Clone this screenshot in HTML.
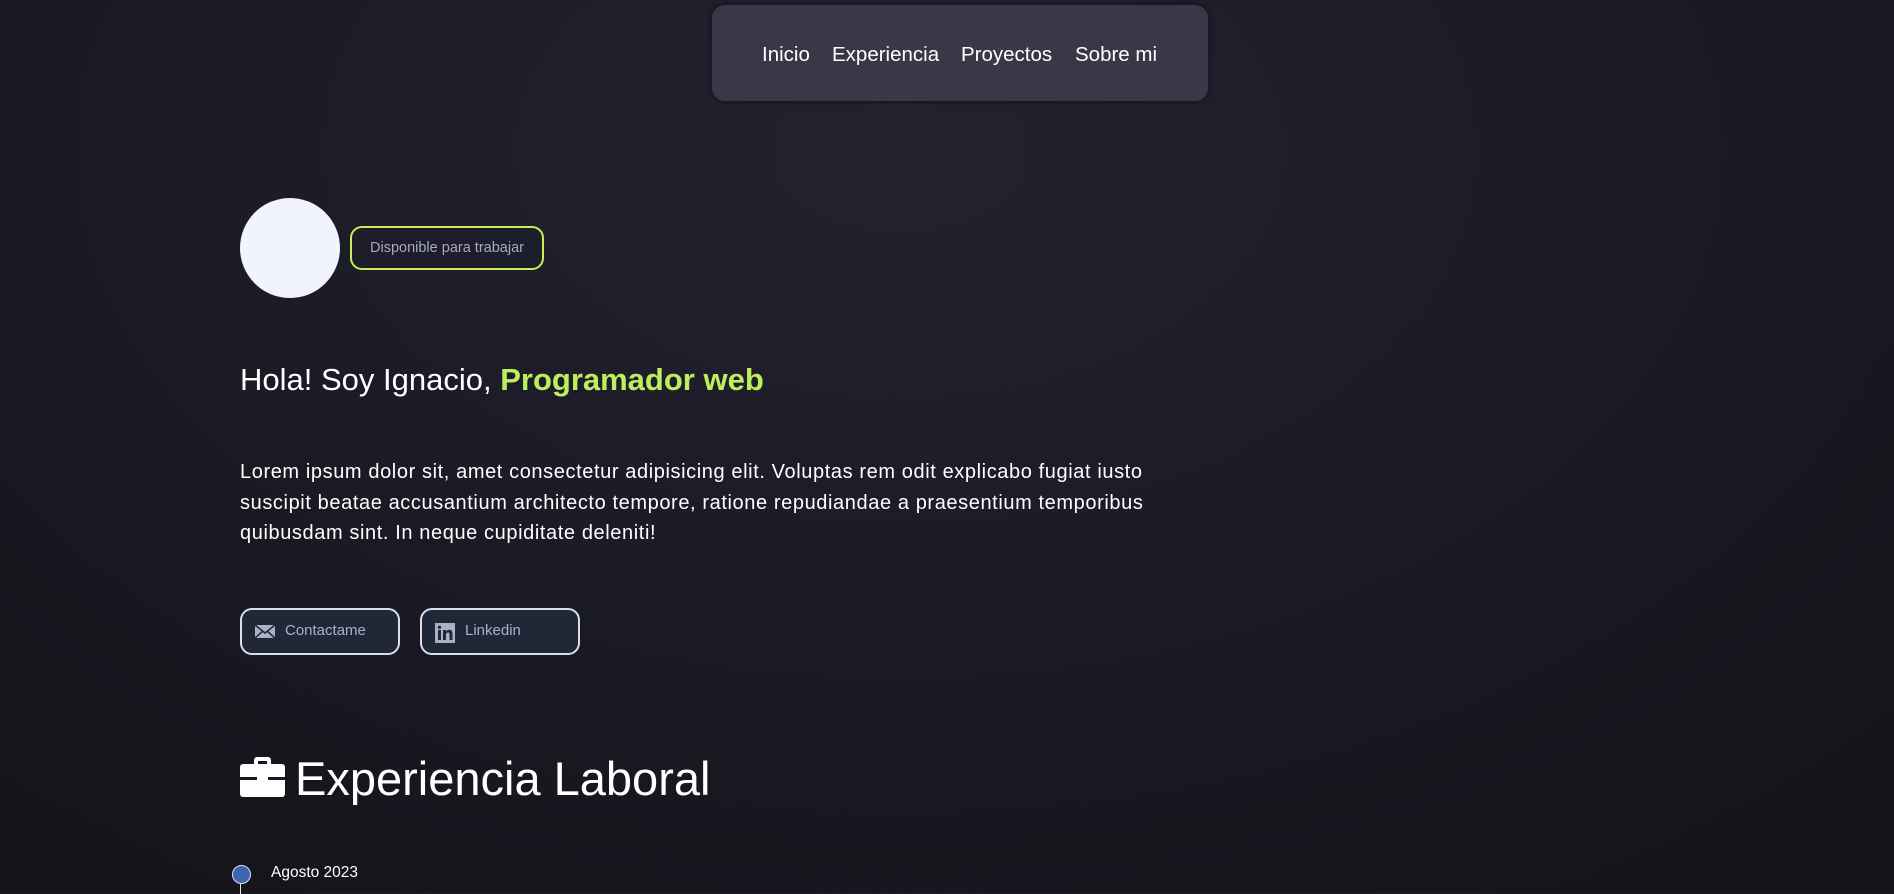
<!DOCTYPE html>
<html><head><meta charset="utf-8"><style>
html,body{margin:0;padding:0;}
body{width:1894px;height:893px;overflow:hidden;position:relative;font-family:"Liberation Sans",sans-serif;color:#fff;
background:radial-gradient(ellipse 1400px 900px at 900px 150px,#23222f 0%,#1c1b27 45%,#141419 100%);}
.nav{position:absolute;left:711px;top:4px;width:496px;height:96px;border:1px solid #1a1a24;border-radius:14px;background:#3a3848;box-shadow:0 0 4px rgba(0,0,0,.5);}
.nav span{position:absolute;top:38px;font-size:20.5px;color:#fff;}
.av{position:absolute;left:240px;top:198px;width:100px;height:100px;border-radius:50%;background:#f1f4fa;}
.badge{position:absolute;left:350px;top:226px;width:190px;height:40px;border:2px solid #c6ef54;border-radius:12px;box-sizing:content-box;font-size:14.5px;color:#a4acbf;line-height:40px;text-align:center;}
h1{position:absolute;left:240px;top:362px;margin:0;font-size:31px;font-weight:normal;}
h1 b{color:#bdee5e;}
p{position:absolute;left:240px;top:457px;margin:0;width:1100px;font-size:20px;line-height:30.5px;letter-spacing:0.6px;}
.btn{position:absolute;top:608px;width:156px;height:43px;border:2px solid #d9dee8;border-radius:12px;background:#202838;color:#a8b2c5;font-size:15px;}
.btn span{position:absolute;left:43px;top:12px;}
.btn svg{position:absolute;left:13px;top:13px;}
h2{position:absolute;left:295px;top:751px;margin:0;font-size:47px;font-weight:normal;}
.dot{position:absolute;left:232px;top:865px;width:17px;height:17px;border-radius:50%;background:#3e64b0;border:1px solid #dfe4f0;}
.line{position:absolute;left:240px;top:884px;width:1px;height:10px;background:#dfe4f0;}
.date{position:absolute;left:271px;top:864px;font-size:15.5px;}
</style></head><body>
<div class="nav"><span style="left:50px">Inicio</span><span style="left:120px">Experiencia</span><span style="left:249px">Proyectos</span><span style="left:363px">Sobre mi</span></div>
<div class="av"></div>
<div class="badge">Disponible para trabajar</div>
<h1>Hola! Soy Ignacio, <b>Programador web</b></h1>
<p>Lorem ipsum dolor sit, amet consectetur adipisicing elit. Voluptas rem odit explicabo fugiat iusto<br>suscipit beatae accusantium architecto tempore, ratione repudiandae a praesentium temporibus<br>quibusdam sint. In neque cupiditate deleniti!</p>
<div class="btn" style="left:240px"><svg width="20" height="16" viewBox="0 0 20 16"><rect x="0" y="2" width="20" height="13" fill="#a8b2c5"/><path d="M0 2 L10 10 L20 2 M0 15 L8 8 M20 15 L12 8" stroke="#202838" stroke-width="1.5" fill="none"/></svg><span>Contactame</span></div>
<div class="btn" style="left:420px"><svg width="20" height="20" viewBox="0 0 20 20"><rect width="20" height="20" fill="#a8b2c5"/><rect x="3" y="7" width="3" height="10" fill="#202838"/><circle cx="4.5" cy="4.3" r="1.7" fill="#202838"/><path d="M8 7h3v1.5c.7-1.2 2-1.8 3.300-1.8 2.2 0 3.2 1.4 3.2 4V17h-3v-5.5c0-1.3-.4-2-1.5-2s-2 .8-2 2.2V17H8z" fill="#202838"/></svg><span>Linkedin</span></div>
<svg style="position:absolute;left:240px;top:757px" width="45" height="40" viewBox="0 0 45 40"><path d="M14 7V3a3 3 0 0 1 3-3h11a3 3 0 0 1 3 3v4h-4V4H18v3z" fill="#fff"/><rect x="0" y="7" width="45" height="33" rx="3" fill="#fff"/><rect x="0" y="20" width="45" height="3" fill="#181820"/><rect x="17" y="18" width="11" height="7" rx="1" fill="#fff"/></svg>
<h2>Experiencia Laboral</h2>
<div class="dot"></div><div class="line"></div>
<div class="date">Agosto 2023</div>
</body></html>
